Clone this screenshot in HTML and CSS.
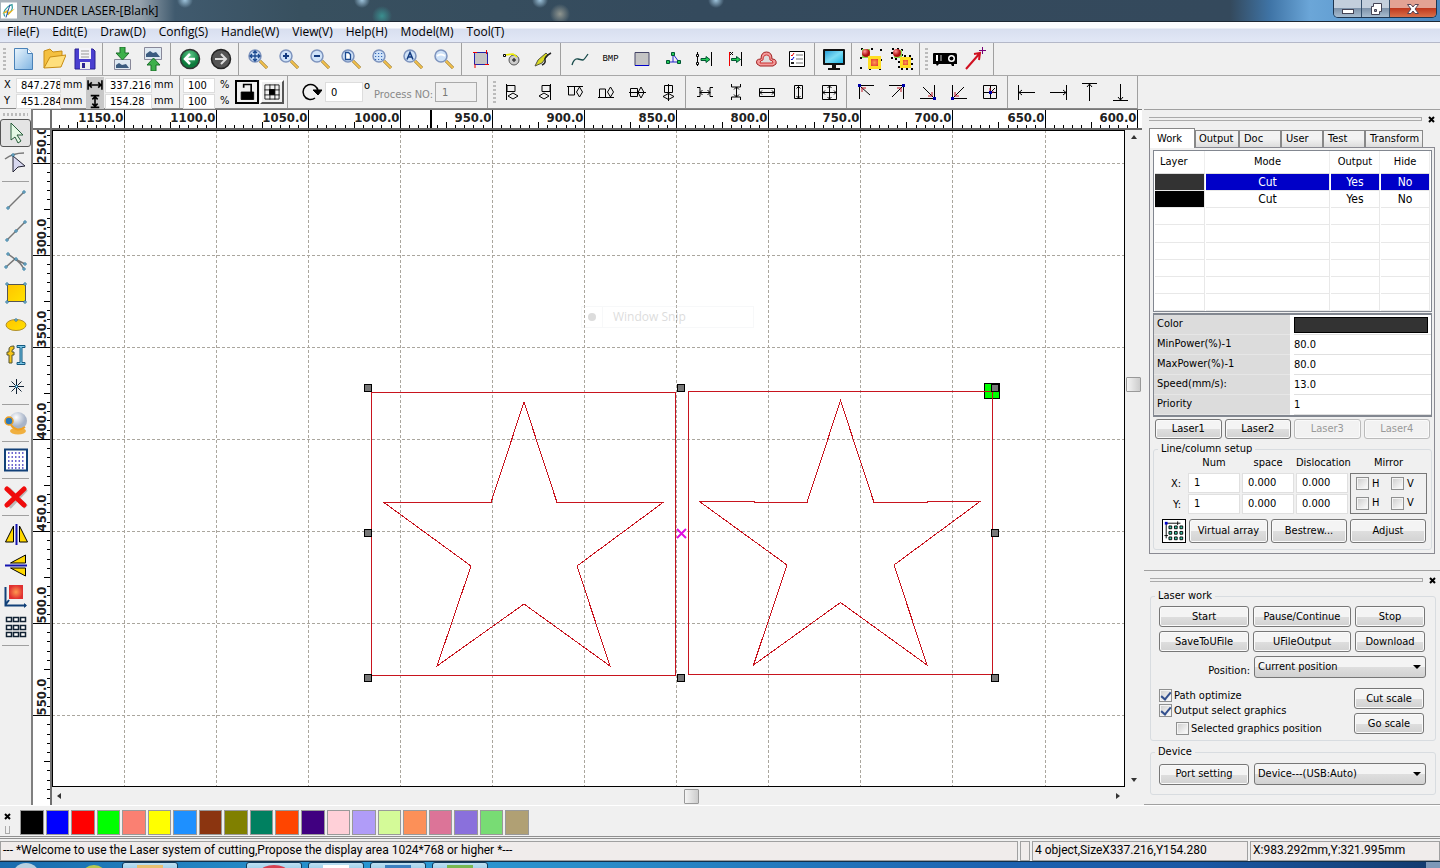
FILE: index.html
```html
<!DOCTYPE html>
<html lang="en">
<head>
<meta charset="utf-8">
<title>THUNDER LASER-[Blank]</title>
<link rel="stylesheet" href="styles.css">
</head>
<body>
<header class="titlebar">
  <svg class="app-logo" viewBox="0 0 16 16"><rect width="16" height="16" fill="#fff"/><path d="M4 14C1 10 5 4 11 2c1 4-1 8-5 10" fill="none" stroke="#2c9a9a" stroke-width="1.200"/><path d="M1 11l6-4v3l7-4-7 7v-3z" fill="#f0b820"/><path d="M9 2L5 15" stroke="#2450a0"/></svg>
  <h1 class="app-title">THUNDER LASER-[Blank]</h1>
  <div class="win-buttons">
    <button class="win-btn" aria-label="Minimize"><svg viewBox="0 0 14 12"><rect x="1.500" y="6.500" width="11" height="4" fill="#fff" stroke="#445"/></svg></button>
    <button class="win-btn" aria-label="Restore"><svg viewBox="0 0 14 12"><path d="M4.500 .5h8v8h-2v3h-8v-8h2z" fill="#fff" stroke="#445"/><path d="M5.500 6.500h2v2h-2z" fill="#99a" stroke="#445"/></svg></button>
    <button class="win-btn win-close" aria-label="Close"><svg viewBox="0 0 14 12"><path d="M1.500 1.500h3.500l2 2.500 2-2.500h3.500L9 6l3.500 4.500H9L7 8l-2 2.500H1.500L5 6z" fill="#fff" stroke="#545"/></svg></button>
  </div>
</header>

<nav class="menubar">
  <button>File(F)</button><button>Edit(E)</button><button>Draw(D)</button><button>Config(S)</button><button>Handle(W)</button><button>View(V)</button><button>Help(H)</button><button>Model(M)</button><button>Tool(T)</button>
</nav>

<svg class="defs" width="0" height="0">
  <defs>
    <linearGradient id="page" x2="1" y2="1"><stop stop-color="#eaf5fd"/><stop offset="1" stop-color="#7fb4e2"/></linearGradient>
    <linearGradient id="screen" x2="1" y2="1"><stop stop-color="#2a9fd8"/><stop offset=".5" stop-color="#7cdcf5"/><stop offset="1" stop-color="#1fb6e6"/></linearGradient>
    <radialGradient id="ball" cx=".35" cy=".3"><stop stop-color="#f99"/><stop offset="1" stop-color="#b01010"/></radialGradient>
    <radialGradient id="hot"><stop stop-color="#ff9a50"/><stop offset="1" stop-color="#e03030"/></radialGradient>
    <radialGradient id="green" cy=".3"><stop stop-color="#5fc98a"/><stop offset="1" stop-color="#0d7a3c"/></radialGradient>
    <radialGradient id="pearl" cx=".4" cy=".3"><stop stop-color="#fff"/><stop offset="1" stop-color="#a8b4c8"/></radialGradient>
    <linearGradient id="gold" x2="1" y2="1"><stop stop-color="#ffc400"/><stop offset="1" stop-color="#ffe200"/></linearGradient>
    <symbol id="lens" viewBox="0 0 24 24"><path d="M14 14l7 7" stroke="#8a6a20" stroke-width="3"/><path d="M14 14l7 7" stroke="#f2c14e" stroke-width="2"/><circle cx="9" cy="9" r="6" fill="#cfe2f8" stroke="#7d93bd" stroke-width="1.500"/></symbol>
  </defs>
</svg>

<div class="toolbar tools-main">
  <i class="grip"></i>
  <button aria-label="New"><svg viewBox="0 0 24 24"><path d="M3.500 1.500h13l5 5v16h-18z" fill="url(#page)" stroke="#4a82b8"/><path d="M16.500 1.500v5h5" fill="#fff" stroke="#4a82b8"/></svg></button>
  <button aria-label="Open"><svg viewBox="0 0 24 24"><path d="M2 21V4l6-2 3 3 9-1v5" fill="#f4c040" stroke="#c78c14"/><path d="M2 21l6-11 16-2-5 12z" fill="#ffdf7c" stroke="#c78c14"/></svg></button>
  <button aria-label="Save"><svg viewBox="0 0 24 24"><path d="M2 2h18l2 2v18H2z" fill="#4a3fd0" stroke="#2b2390"/><path d="M6 1h12v11H6z" fill="#f4f4f8"/><path d="M8 4h8M8 7h8M8 10h8" stroke="#999"/><path d="M7 15h10v7H7z" fill="#eee"/><path d="M9 16h3v5H9z" fill="#2b2390"/></svg></button>
  <i class="sep"></i>
  <button aria-label="Import"><svg viewBox="0 0 24 24"><path d="M4.500 12.500h16v10h-16z" fill="#dfe9f2" stroke="#889"/><path d="M6 21v-3l3-2 3 2 4-1 3 4z" fill="#3c5c80"/><path d="M10 0h5v6h4l-6.500 7L6 6h4z" fill="#3db04a" stroke="#1c6f2a"/></svg></button>
  <button aria-label="Export"><svg viewBox="0 0 24 24"><path d="M3.500 .5h17v12h-17z" fill="#dfe9f2" stroke="#889"/><path d="M5 10V7l4-3 3 2 3-1 4 5z" fill="#3c5c80"/><path d="M10 24v-6H6l6.500-7 6.500 7h-4v6z" fill="#3db04a" stroke="#1c6f2a"/></svg></button>
  <i class="sep"></i>
  <button aria-label="Undo"><svg viewBox="0 0 24 24"><circle cx="12" cy="12" r="9.500" fill="url(#green)" stroke="#333" stroke-width="1.500"/><path d="M17 12H8M12 7l-5 5 5 5" fill="none" stroke="#fff" stroke-width="2.500"/></svg></button>
  <button aria-label="Redo"><svg viewBox="0 0 24 24"><circle cx="12" cy="12" r="9.500" fill="#555" stroke="#222" stroke-width="1.500"/><path d="M6 12h10M12 7l5 5-5 5" fill="none" stroke="#ddd" stroke-width="2"/></svg></button>
  <i class="sep"></i>
  <button aria-label="Pan"><svg viewBox="0 0 24 24"><use href="#lens"/><path d="M9 4v10M4 9h10M7 6l2-2 2 2M7 12l2 2 2-2M6 7L4 9l2 2M12 7l2 2-2 2" fill="none" stroke="#1c4a90" stroke-width="1.300"/></svg></button>
  <button aria-label="Zoom in"><svg viewBox="0 0 24 24"><use href="#lens"/><path d="M9 6v6M6 9h6" stroke="#123a80" stroke-width="2"/></svg></button>
  <button aria-label="Zoom out"><svg viewBox="0 0 24 24"><use href="#lens"/><path d="M6 9h6" stroke="#123a80" stroke-width="2"/></svg></button>
  <button aria-label="Zoom page"><svg viewBox="0 0 24 24"><use href="#lens"/><path d="M6.500 5.500h3l2 2v5h-5z" fill="#fff" stroke="#1c4a90" stroke-width="1.300"/></svg></button>
  <button aria-label="Zoom all"><svg viewBox="0 0 24 24"><use href="#lens"/><path d="M5 6.500h8M5 9.500h8M5 12.500h8" stroke="#3468b8" stroke-width="1.200" stroke-dasharray="1.200 1.800"/></svg></button>
  <button aria-label="Zoom selected"><svg viewBox="0 0 24 24"><use href="#lens"/><path d="M6 12.500l3-7 3 7M7 10h4" fill="none" stroke="#123a80" stroke-width="1.500"/></svg></button>
  <button aria-label="Zoom window"><svg viewBox="0 0 24 24"><use href="#lens"/><path d="M5 9q4-3 8 0" stroke="#fff" stroke-width="2" fill="none"/></svg></button>
  <i class="sep"></i>
  <button aria-label="Frame"><svg viewBox="0 0 24 24"><path d="M5.500 5.500h13v12h-13z" fill="#c4c4c4" stroke="#22a"/><path d="M4 5.500h4M6 17v4M17.500 3v4M16 17.500h4" stroke="#e00"/></svg></button>
  <button aria-label="Lead setting"><svg viewBox="0 0 24 24"><circle cx="14" cy="13" r="5" fill="#ccc" stroke="#555"/><path d="M5 8l8-1 4 3" fill="none" stroke="#ee0" stroke-width="1.500"/><path d="M3.500 7.500h2v2h-2zM13 12h2v2h-2z" fill="#fff" stroke="#000"/></svg></button>
  <button aria-label="Edit path"><svg viewBox="0 0 24 24"><path d="M4 19l3-6 8-7 2 2-6 8z" fill="#d8d820" stroke="#554"/><path d="M11 18q4-2 3-5t6-7" fill="none" stroke="#222" stroke-width="1.500"/></svg></button>
  <i class="sep"></i>
  <button aria-label="Curve smooth"><svg viewBox="0 0 24 24"><path d="M4 18q2-7 6-6t5 1 5-6" fill="none" stroke="#174a4a" stroke-width="1.300"/></svg></button>
  <button aria-label="Bitmap"><span class="bmp">BMP</span></button>
  <button aria-label="Rectangle cut"><svg viewBox="0 0 24 24"><path d="M5 5.500h14v13H5z" fill="#c4c4c4" stroke="#446"/><path d="M5 18.500h14" stroke="#00c"/></svg></button>
  <button aria-label="Nodes"><svg viewBox="0 0 24 24"><path d="M12 7v8H7m5 0h6l-6-8" fill="none" stroke="#22c"/><path d="M10.500 5.500h3v3h-3zM5.500 13.500h3v3h-3zM16.500 13.500h3v3h-3z" fill="#2c5" stroke="#053"/></svg></button>
  <button aria-label="Offset"><svg viewBox="0 0 24 24"><path d="M5.500 5v14M19.500 5v14" stroke="#000"/><path d="M9 11.500h5v-2l4 3-4 3v-2H9z" fill="#2c5" stroke="#053"/><path d="M4.500 7.500h2v2h-2zM4.500 15.500h2v2h-2z" fill="#fff" stroke="#000"/></svg></button>
  <button aria-label="Shift"><svg viewBox="0 0 24 24"><path d="M6.500 5v14" stroke="#e00"/><path d="M18.500 5v14M7 5l3 3m0-3L7 8" stroke="#000"/><path d="M8.500 11.500h5v-2l4 3-4 3v-2h-5z" fill="#2c5" stroke="#053"/></svg></button>
  <button aria-label="Parallel"><svg viewBox="0 0 24 24"><path d="M3 17q-2-5 4-5 0-7 5.500-7t5.500 7q5 0 4 5l-3 2H6z" fill="#f49a9a" stroke="#a02020"/><path d="M6 16q0-3 3-3 0-5 3.500-5t3.500 5q3 0 3 3z" fill="#ddd" stroke="#c33"/></svg></button>
  <button aria-label="Options"><svg viewBox="0 0 24 24"><path d="M4.500 4.500h15v15h-15z" fill="#fff" stroke="#000"/><path d="M11 8h7M11 12h7M11 16h7" stroke="#777"/><path d="M6 8l1 1 2-3" fill="none" stroke="#e00"/><path d="M6 12l1 1 2-3" fill="none" stroke="#00c"/><path d="M6 15h3v2H6z" fill="#222"/></svg></button>
  <i class="sep"></i>
  <button aria-label="Preview"><svg viewBox="0 0 24 24"><rect x="1" y="2" width="22" height="16" rx="1" fill="#111"/><path d="M3 4h18v12H3z" fill="url(#screen)"/><path d="M10 18h4v3h4v2H6v-2h4z" fill="#111"/></svg></button>
  <i class="sep"></i>
  <button aria-label="Group"><svg viewBox="0 0 24 24"><path d="M2 2h20v20H2z" fill="none" stroke="#000" stroke-width="2" stroke-dasharray="2 8"/><path d="M3 2h8v9H3z" fill="#8d5"/><circle cx="7" cy="6" r="4" fill="url(#ball)"/><path d="M10.500 10.500h10v10h-10z" fill="url(#hot)" stroke="#fd2" stroke-width="3"/></svg></button>
  <button aria-label="Ungroup"><svg viewBox="0 0 24 24"><path d="M2 2h10v10H2zM9 9h13v13H9z" fill="none" stroke="#000" stroke-width="2" stroke-dasharray="2 3"/><path d="M4 3h8v8H4z" fill="#8d5"/><circle cx="7" cy="6" r="4" fill="url(#ball)"/><path d="M11.500 11.500h8v8h-8z" fill="url(#hot)" stroke="#fd2" stroke-width="3"/></svg></button>
  <i class="sep"></i><i class="grip"></i>
  <button aria-label="Projector"><svg viewBox="0 0 24 24"><path d="M0 7q0-1 1-1h21q2 0 2 2v9h-3v2h-2l-1-2H6l-2 2-1-2H0z" fill="#000"/><path d="M4 8v6" stroke="#fff" stroke-width="2"/><path d="M8 8v6" stroke="#666" stroke-width="2"/><circle cx="18.500" cy="11.500" r="3.500" fill="#fff"/><circle cx="18.500" cy="11.500" r="2" fill="#000"/></svg></button>
  <button aria-label="Pick origin"><svg viewBox="0 0 24 24"><path d="M2 22L16 6M10 7l6-1-1 7" fill="none" stroke="#d01020" stroke-width="2"/><path d="M18.500 0v7M15 3.500h7" stroke="#707"/></svg></button>
  <i class="sep"></i>
</div>

<div class="toolbar tools-object">
  <div class="coords">
    <label for="pos-x">X</label><input id="pos-x" value="847.278"><span>mm</span><svg viewBox="0 0 16 15" class="axis"><path d="M1.500 3v9M14.500 3v9M2 7.500h12M5 5L2.500 7.500 5 10M11 5l2.500 2.500L11 10" fill="none" stroke="#000" stroke-width="1.500"/></svg><input aria-label="Width" value="337.216"><span>mm</span>
    <label for="pos-y">Y</label><input id="pos-y" value="451.284"><span>mm</span><svg viewBox="0 0 16 15" class="axis"><path d="M4 2.500h8M4 13.500h8M8 3v10M5.500 6L8 3.500 10.500 6M5.500 10L8 12.500l2.500-2.500" fill="none" stroke="#000" stroke-width="1.500"/></svg><input aria-label="Height" value="154.28"><span>mm</span>
  </div>
  <i class="sep"></i>
  <div class="scale">
    <input aria-label="Scale X" value="100"><span>%</span>
    <input aria-label="Scale Y" value="100"><span>%</span>
  </div>
  <button class="boxed pressed" aria-label="Lock ratio"><svg viewBox="0 0 24 24"><path class="solid" d="M5 12h15v9H5z"/><path class="bold" d="M8 7V3h9v9"/></svg></button>
  <button class="boxed" aria-label="Anchor"><svg viewBox="0 0 24 24"><path d="M3.500 3.500h17v17h-17zM9.500 3v18M15.500 3v18M3 9.500h18M3 15.500h18"/><path class="solid" d="M9 9h6v6H9z"/></svg></button>
  <i class="sep"></i>
  <button aria-label="Rotate" class="rotate"><svg viewBox="0 0 24 24"><path class="arc" d="M17 18a7.500 7.500 0 1 1 3-7"/><path class="solid" d="M15 10h9l-4 5z"/></svg></button>
  <input class="angle" aria-label="Angle" value="0"><span class="degree">o</span>
  <label class="process" for="proc">Process NO:</label><input id="proc" class="proc" value="1" disabled>
  <i class="sep"></i><i class="grip"></i>
  <button aria-label="Align left"><svg viewBox="0 0 24 24"><path d="M5.500 4v16M6 5.500h8v6H6zM7 16l5-3 5 3-5 3z"/></svg></button>
  <button aria-label="Align right"><svg viewBox="0 0 24 24"><path d="M18.500 4v16M18 5.500h-8v6h8zM7 16l5-3 5 3-5 3z"/></svg></button>
  <button aria-label="Align top"><svg viewBox="0 0 24 24"><path d="M4 6.500h16M5.500 7v8h6V7M16.500 7l3 5-3 5-3-5z"/></svg></button>
  <button aria-label="Align bottom"><svg viewBox="0 0 24 24"><path d="M4 17.500h16M5.500 17V9h6v8M16.500 17l3-5-3-5-3 5z"/></svg></button>
  <button aria-label="Align middle"><svg viewBox="0 0 24 24"><path d="M4 12.500h17M5.500 8.500h7v8h-7zM16 7l3 5.500-3 5.500-3-5.500z"/></svg></button>
  <button aria-label="Align center"><svg viewBox="0 0 24 24"><path d="M12.500 4v17M8.500 5.500h8v7h-8zM7 16.500l5.500-3 5.500 3-5.500 3z"/></svg></button>
  <i class="sep"></i>
  <button aria-label="Space horizontally"><svg viewBox="0 0 24 24"><path d="M4 7.500h3v9H4M20 7.500h-3v9h3M7 12.500h10M9.500 10L7 12.500 9.500 15M14.500 10l2.500 2.500-2.500 2.500"/></svg></button>
  <button aria-label="Space vertically"><svg viewBox="0 0 24 24"><path d="M7.500 4v3h9V4M7.500 20v-3h9v3M12.500 7v10M10 9.500L12.500 7 15 9.500M10 14.500l2.500 2.500 2.500-2.500"/></svg></button>
  <button aria-label="Same width"><svg viewBox="0 0 24 24"><path d="M4.500 8.500h15v8h-15zM5 12.500h14M7 10.500l-2 2 2 2M17 10.500l2 2-2 2"/></svg></button>
  <button aria-label="Same height"><svg viewBox="0 0 24 24"><path d="M8.500 5.500h8v13h-8zM12.500 6v12M10.500 8.500l2-2 2 2M10.500 16l2 2 2-2"/></svg></button>
  <button aria-label="Same size"><svg viewBox="0 0 24 24"><path d="M5.500 5.500h14v14h-14zM12.500 5v15M5 12.500h15M10.500 8l2-2 2 2M10.500 17l2 2 2-2M8 10.500l-2 2 2 2M17 10.500l2 2-2 2"/></svg></button>
  <i class="sep"></i>
  <button aria-label="To top left"><svg viewBox="0 0 24 24"><path d="M5.500 19V5.500H20M7 7l9 8"/><path d="M8 12V8h4" class="red"/><path d="M4 4h3v3H4z" class="dot"/></svg></button>
  <button aria-label="To top right"><svg viewBox="0 0 24 24"><path d="M18.500 19V5.500H4M17 7l-10 10"/><path d="M16 12V8h-4" class="red"/><path d="M17 4h3v3h-3z" class="dot"/></svg></button>
  <button aria-label="To bottom right"><svg viewBox="0 0 24 24"><path d="M18.500 5v13.500H4M17 17L7 7"/><path d="M16 12v4h-4" class="red"/><path d="M17 17h3v3h-3z" class="dot"/></svg></button>
  <button aria-label="To bottom left"><svg viewBox="0 0 24 24"><path d="M5.500 5v13.500H20M7 17L17 7"/><path d="M8 12v4h4" class="red"/><path d="M4 17h3v3H4z" class="dot"/></svg></button>
  <button aria-label="To center"><svg viewBox="0 0 24 24"><path d="M5.500 5.500h13v13h-13zM12.500 5v14M5 12.500h14M13 12l4-4"/><path d="M12 8v4h4" class="red"/><path d="M11 11h3v3h-3z" class="dot"/></svg></button>
  <i class="sep"></i>
  <button aria-label="To left edge"><svg viewBox="0 0 24 24"><path d="M3.500 5v15M4 12.500h16M7 10l-3 2.500L7 15"/></svg></button>
  <button aria-label="To right edge"><svg viewBox="0 0 24 24"><path d="M20.500 5v15M4 12.500h16M17 10l3 2.500-3 2.500"/></svg></button>
  <button aria-label="To top edge"><svg viewBox="0 0 24 24"><path d="M5 3.500h15M12.500 4v17M10 7l2.500-3L15 7"/></svg></button>
  <button aria-label="To bottom edge"><svg viewBox="0 0 24 24"><path d="M5 20.500h15M12.500 4v16M10 17l2.500 3 2.500-3"/></svg></button>
</div>

<main class="workspace">
  <aside class="side-tools">
    <i class="grip-h"></i>
    <button class="pressed" aria-label="Select"><svg viewBox="0 0 24 24"><path d="M7 2l12 12h-6l4 6-3 2-3-6-4 3z" fill="#e4f8e4" stroke="#275c3a"/></svg></button>
    <button aria-label="Edit nodes"><svg viewBox="0 0 24 24"><path d="M1 8q8-6 19-6" fill="none" stroke="#777" stroke-width="1.500"/><path d="M9 5v16l5-5 7-1z" fill="#d8d8f0" stroke="#223"/><path d="M8 3h2v2H8z" class="node"/></svg></button>
    <hr>
    <button aria-label="Line"><svg viewBox="0 0 24 24"><path d="M4 20L20 4" stroke="#777" stroke-width="1.500"/><path d="M3 19h2v2H3zM19 3h2v2h-2z" class="node"/></svg></button>
    <button aria-label="Polyline"><svg viewBox="0 0 24 24"><path d="M3 21L21 3" stroke="#777" stroke-width="1.500"/><path d="M2 20h2v2H2zM11 11h2v2h-2zM20 2h2v2h-2z" class="node"/></svg></button>
    <button aria-label="Bezier"><svg viewBox="0 0 24 24"><path d="M2 17l9-8 10 5M4 4l7 5q5 3 9 10" fill="none" stroke="#777" stroke-width="1.500"/><path d="M1 16h2v2H1zM3 3h2v2H3zM11 8h2v2h-2zM20 13h2v2h-2zM19 18h2v2h-2z" class="node"/></svg></button>
    <button aria-label="Rectangle"><svg viewBox="0 0 24 24"><path d="M3.500 3.500h18v17h-18z" fill="url(#gold)" stroke="#555"/><path d="M2 2h2v2H2zM20 2h2v2h-2zM2 20h2v2H2zM20 20h2v2h-2z" class="node"/></svg></button>
    <button aria-label="Ellipse"><svg viewBox="0 0 24 24"><ellipse cx="12" cy="13" rx="10" ry="5.500" fill="url(#gold)" stroke="#b09030"/><path d="M11 7h2v2h-2z" class="node"/></svg></button>
    <button aria-label="Text"><svg viewBox="0 0 24 24"><path d="M5 20V12H3V9h2V6q0-3 5-3v3q-2 0-2 2v1h2v3H8v8z" fill="#f5c518" stroke="#553"/><path d="M13 2.500h8v2h-3v15h3v2h-8v-2h3v-15h-3z" fill="#7cc8e8" stroke="#155a80"/></svg></button>
    <button aria-label="Point"><svg viewBox="0 0 24 24"><path d="M12.500 5v15M5 12.500h15M7.500 7.500l10 10M17.500 7.500l-10 10" stroke="#123"/><path d="M11.500 11.500h2v2h-2z" class="node"/></svg></button>
    <hr>
    <button aria-label="Camera"><svg viewBox="0 0 24 24"><ellipse cx="14" cy="20" rx="8" ry="3.500" fill="#f0b040"/><circle cx="14" cy="10" r="9" fill="url(#pearl)"/><path d="M7 14q6 8 14 2" stroke="#f0a020" stroke-width="2" fill="none"/><circle cx="5" cy="10" r="4" fill="#2a78b8" stroke="#f0a020" stroke-width="1.500"/></svg></button>
    <hr>
    <button aria-label="Grid"><svg viewBox="0 0 24 24"><path d="M1 1.500h22v21H1z" fill="#fff" stroke="#114078" stroke-width="2"/><path d="M4 5h17M4 9h17M4 13h17M4 17h17M4 20h17" stroke="#4038c0" stroke-width="1.500" stroke-dasharray="1.500 2"/></svg></button>
    <hr>
    <button aria-label="Delete"><svg viewBox="0 0 24 24"><path d="M4 4l18 18M22 4L5 22" stroke="#bbb" stroke-width="5"/><path d="M3 4l17 16M20 4L3 20" stroke="#f00c0c" stroke-width="5" stroke-linecap="round"/></svg></button>
    <hr>
    <button aria-label="Mirror horizontal"><svg viewBox="0 0 24 24"><path d="M9.500 4v16h-8zM15.500 4v16h8z" fill="#ffd800" stroke="#000"/><path d="M12.500 2v21" stroke="#1414b0" stroke-width="2"/></svg></button>
    <button aria-label="Mirror vertical"><svg viewBox="0 0 24 24"><path d="M21.500 2v8h-15zM21.500 15v8l-15-8z" fill="#ffd800" stroke="#000"/><path d="M1 12.500h22" stroke="#1414b0" stroke-width="2"/></svg></button>
    <button aria-label="Origin"><svg viewBox="0 0 24 24"><path d="M5 1h14v14H5z" fill="url(#hot)"/><path d="M1.500 3v18.500H22M5 16l-3 4" fill="none" stroke="#114078" stroke-width="2"/><path d="M20 19l3 2.500-3 2.500z" fill="#114078"/></svg></button>
    <button aria-label="Array"><svg viewBox="0 0 24 24"><path d="M2.500 2.500h5v4h-5zM9.500 2.500h5v4h-5zM16.500 2.500h5v4h-5zM2.500 10.500h5v4h-5zM9.500 10.500h5v4h-5zM16.500 10.500h5v4h-5zM2.500 17.500h5v4h-5zM9.500 17.500h5v4h-5zM16.500 17.500h5v4h-5z" fill="#fff" stroke="#123" stroke-width="1.500"/></svg></button>
    <hr>
  </aside>

  <section class="stage">
    <div class="corner"></div>
    <svg class="ruler-x" id="ruler-x"></svg>
    <svg class="ruler-y" id="ruler-y"></svg>
    <div class="canvas">
      <svg id="drawing">
        <g id="grid" transform="translate(-1 -1)"></g>
        <g transform="translate(-53 -131)">
          <g class="cut">
            <path d="M371.500 392.500H675.500V675.500H371.500z"/>
            <path d="M524 402L557 502.500H663L577 566L610 666L524 604L437 666L471 566L384 502.500H491z"/>
            <path d="M688.500 391.500H992.500V674.500H688.500z"/>
          </g>
          <path class="origin" d="M984.500 383.500h15v15h-15z"/>
          <g class="cut">
            <path d="M984 391.500H992.500V399"/>
            <path d="M840.500 400.500L874 502.500H927V501.500H980L894 565L927 665L840.500 602.500L753.500 665L787 565L699.500 501.500H754V502.500H807z"/>
          </g>
          <path class="handle" d="M364.500 384.500h7v7h-7zM677.500 384.500h7v7h-7zM991.500 384.500h7v7h-7zM364.500 529.500h7v7h-7zM991.500 529.500h7v7h-7zM364.500 674.500h7v7h-7zM677.500 674.500h7v7h-7zM991.500 674.500h7v7h-7z"/>
          <path class="center" d="M677 529l9 9M686 529l-9 9"/>
          <g class="snip"><rect x="581.500" y="306.500" width="172" height="21"/><path d="M602.500 307v20"/><circle cx="592" cy="317" r="4"/><text x="613" y="321">Window Snip</text></g>
        </g>
      </svg>
    </div>
    <div class="scroll-y"><i class="arrow up"></i><i class="thumb"></i><i class="arrow down"></i></div>
    <div class="scroll-x"><i class="arrow left"></i><i class="thumb"></i><i class="arrow right"></i></div>
  </section>

  <aside class="docks">
    <section class="dock dock-work">
      <div class="dock-bar"><i></i><button aria-label="Close panel"><svg viewBox="0 0 7 7"><path d="M1 1l5 5M6 1L1 6" stroke="#000" stroke-width="2"/></svg></button></div>
      <div class="tabs" role="tablist">
        <button class="active" role="tab">Work</button><button role="tab">Output</button><button role="tab">Doc</button><button role="tab">User</button><button role="tab">Test</button><button role="tab">Transform</button>
      </div>
      <div class="tab-page">
        <table class="layers">
          <thead><tr><th>Layer</th><th>Mode</th><th>Output</th><th>Hide</th></tr></thead>
          <tbody>
            <tr class="selected"><td class="ink-gray"></td><td>Cut</td><td>Yes</td><td>No</td></tr>
            <tr><td class="ink-black"></td><td>Cut</td><td>Yes</td><td>No</td></tr>
            <tr><td></td><td></td><td></td><td></td></tr>
            <tr><td></td><td></td><td></td><td></td></tr>
            <tr><td></td><td></td><td></td><td></td></tr>
            <tr><td></td><td></td><td></td><td></td></tr>
            <tr><td></td><td></td><td></td><td></td></tr>
            <tr><td></td><td></td><td></td><td></td></tr>
          </tbody>
        </table>
        <dl class="props">
          <dt>Color</dt><dd><i class="color-bar"></i></dd>
          <dt>MinPower(%)-1</dt><dd>80.0</dd>
          <dt>MaxPower(%)-1</dt><dd>80.0</dd>
          <dt>Speed(mm/s):</dt><dd>13.0</dd>
          <dt>Priority</dt><dd>1</dd>
        </dl>
        <div class="lasers"><button class="btn">Laser1</button><button class="btn">Laser2</button><button class="btn" disabled>Laser3</button><button class="btn" disabled>Laser4</button></div>
        <fieldset class="array-box">
          <legend>Line/column setup</legend>
          <div class="array-grid">
            <span></span><span class="head">Num</span><span class="head">space</span><span class="head">Dislocation</span><span class="head">Mirror</span>
            <span class="axis-name">X:</span><input aria-label="X num" value="1"><input aria-label="X space" value="0.000"><input aria-label="X dislocation" value="0.000">
            <div class="mirror"><label><input type="checkbox">H</label><label><input type="checkbox">V</label><label><input type="checkbox">H</label><label><input type="checkbox">V</label></div>
            <span class="axis-name">Y:</span><input aria-label="Y num" value="1"><input aria-label="Y space" value="0.000"><input aria-label="Y dislocation" value="0.000">
          </div>
          <div class="array-actions">
            <button class="array-icon" aria-label="Array direction"><svg viewBox="0 0 24 24"><path d="M3.500 3v17M3 3.500h16M16 1.500v4M1.500 17h4" fill="none" stroke="#000"/><path d="M2 2h3v3H2z" fill="#00c"/><path d="M6.500 6.500h3v3h-3zM12.500 6.500h3v3h-3zM18.500 6.500h3v3h-3zM6.500 12.500h3v3h-3zM12.500 12.500h3v3h-3zM18.500 12.500h3v3h-3zM6.500 18.500h3v3h-3zM12.500 18.500h3v3h-3zM18.500 18.500h3v3h-3z" fill="#3cc8a8" stroke="#000"/></svg></button>
            <button class="btn">Virtual array</button><button class="btn">Bestrew...</button><button class="btn">Adjust</button>
          </div>
        </fieldset>
      </div>
    </section>

    <section class="dock dock-laser">
      <div class="dock-bar"><i></i><button aria-label="Close panel"><svg viewBox="0 0 7 7"><path d="M1 1l5 5M6 1L1 6" stroke="#000" stroke-width="2"/></svg></button></div>
      <fieldset class="laser-box">
        <legend>Laser work</legend>
        <div class="laser-grid">
          <button class="btn">Start</button><button class="btn">Pause/Continue</button><button class="btn">Stop</button>
          <button class="btn">SaveToUFile</button><button class="btn">UFileOutput</button><button class="btn">Download</button>
        </div>
        <div class="field-row"><label for="position">Position:</label><span class="combo"><select id="position"><option>Current position</option></select></span></div>
        <div class="options">
          <div class="checks">
            <label><input type="checkbox" checked>Path optimize</label>
            <label><input type="checkbox" checked>Output select graphics</label>
            <label class="indent"><input type="checkbox">Selected graphics position</label>
          </div>
          <div class="scales"><button class="btn">Cut scale</button><button class="btn">Go scale</button></div>
        </div>
      </fieldset>
      <fieldset class="device-box">
        <legend>Device</legend>
        <div class="field-row device-row"><button class="btn">Port setting</button><span class="combo"><select aria-label="Device"><option>Device---(USB:Auto)</option></select></span></div>
      </fieldset>
    </section>
  </aside>
</main>

<footer class="palette">
  <div class="palette-ctl"><svg viewBox="0 0 7 7"><path d="M1 1l5 5M6 1L1 6" stroke="#000" stroke-width="2"/></svg><i></i></div>
  <div class="swatches" id="swatches"></div>
</footer>
<div class="statusbar">
  <span>--- *Welcome to use the Laser system of cutting,Propose the display area 1024*768 or higher *---</span><span></span><span>4 object,SizeX337.216,Y154.280</span><span>X:983.292mm,Y:321.995mm</span>
</div>
<div class="taskbar"><i class="orb"></i><i class="ie"></i><i class="task folder"></i><i class="task red-app"></i><i class="task doc"></i><i class="task blue-app"></i><i class="task leaf"></i><i class="tray"></i></div>
<script src="app.js"></script>
</body>
</html>
```
FILE: app.js
```js
const NS = "http://www.w3.org/2000/svg";
const STEP = 92.1;      // pixels for 50 mm
const FIRST_X = 72;     // 1150 mm line
const FIRST_Y = 33;     // 250 mm line

function add(parent, tag, attrs, text) {
  const el = document.createElementNS(NS, tag);
  for (const k in attrs) el.setAttribute(k, attrs[k]);
  if (text) el.textContent = text;
  parent.appendChild(el);
}

function draw() {
  const rx = document.getElementById("ruler-x");
  const ry = document.getElementById("ruler-y");
  const grid = document.getElementById("grid");
  for (const el of [rx, ry, grid]) el.replaceChildren();
  const w = rx.clientWidth, h = ry.clientHeight;
  for (let i = -7; FIRST_X + i * STEP / 10 < w; i++) {
    const x = Math.floor(FIRST_X + i * STEP / 10 + .01) + .5;
    const major = i % 10 === 0;
    const len = major ? 18 : i % 5 === 0 ? 6 : 3;
    add(rx, "path", { d: `M${x} ${18 - len}v${len}` });
    if (major) {
      add(rx, "text", { x: x - 1, y: 12, "text-anchor": "end" }, (1150 - i * 5).toFixed(1));
      add(grid, "path", { d: `M${x} 0v2000` });
    }
  }
  add(rx, "path", { d: "M379 0v18", "stroke-width": 2 });
  for (let i = -3; FIRST_Y + i * STEP / 10 < h; i++) {
    const y = Math.floor(FIRST_Y + i * STEP / 10 + .01) + .5;
    const major = i % 10 === 0;
    const len = major ? 17 : i % 5 === 0 ? 6 : 3;
    add(ry, "path", { d: `M${17 - len} ${y}h${len}` });
    if (major) {
      add(ry, "text", { transform: `translate(13 ${y}) rotate(-90)` }, (250 + i * 5).toFixed(1));
      add(grid, "path", { d: `M0 ${y}h3000` });
    }
  }
}
draw();
addEventListener("resize", draw);

const inks = ["#000", "#00f", "#f00", "#0f0", "#fa8072", "#ff0", "#1e90ff", "#8b3510", "#808000", "#008060",
  "#ff4500", "#400080", "#ffd0d8", "#b09cf8", "#d4fa98", "#fc9058", "#dc7498", "#8a70dc", "#78dc74", "#b0a074"];
for (const ink of inks) {
  const b = document.createElement("button");
  b.style.background = ink;
  b.setAttribute("aria-label", ink);
  document.getElementById("swatches").appendChild(b);
}
```
FILE: styles.css
```css
* { box-sizing: border-box; }
body { margin: 0; height: 100vh; display: flex; flex-direction: column; overflow: hidden; background: #f0f0f0; color: #000; font: 11px/14px "DejaVu Sans Condensed", "Noto Sans", sans-serif; }
button, input, select { font: inherit; color: inherit; margin: 0; padding: 0; border: 0; background: none; }
.defs { position: absolute; }
i { display: block; }

.titlebar { flex: none; height: 22px; display: flex; align-items: center; padding-left: 1px; border-bottom: 1px solid #1c2733; background: radial-gradient(circle at 382px 16px, #3a8f8f 0, transparent 10px), radial-gradient(circle at 560px 14px, #8f958f 0, transparent 10px), radial-gradient(circle at 185px 0, #9fc4dc 0, transparent 8px), radial-gradient(circle at 362px 0, #9fc4dc 0, transparent 8px), radial-gradient(circle at 540px 0, #9fc4dc 0, transparent 8px), radial-gradient(circle at 716px 0, #9fc4dc 0, transparent 8px), linear-gradient(90deg, #a9b3bb 0, #96a3ad 140px, #405a6e 175px, #38505f 300px, #344a5d 700px, #34495c 1230px, #3f74a6 1270px, #6ba6d8 1310px, #4a88c0 100%); }
.app-logo { width: 16px; height: 17px; }
.app-title { margin: 0 0 0 5px; font: 12px/18px "Open Sans", "Noto Sans", sans-serif; }
.win-buttons { display: flex; align-self: flex-start; margin-left: auto; margin-right: 3px; height: 18px; border: 1px solid #1d3550; border-top: 0; border-radius: 0 0 5px 5px; overflow: hidden; }
.win-btn { width: 28px; display: flex; align-items: center; justify-content: center; border-right: 1px solid #344f6b; background: linear-gradient(#c3cfdc 45%, #7e93aa 50%, #a8bccf); }
.win-btn svg { width: 14px; height: 12px; }
.win-close { width: 46px; border: 0; background: linear-gradient(#e3a293 45%, #c0391e 50%, #d8704a); }

.menubar { flex: none; height: 21px; display: flex; gap: 13px; padding-left: 7px; border-bottom: 1px solid #b4b8c8; background: linear-gradient(#fbfcfe 0 30%, #d8dff0 35%, #e2e8f6); font: 12px/20px "Open Sans", "Noto Sans", sans-serif; }

.toolbar { flex: none; height: 33px; display: flex; align-items: center; border-bottom: 1px solid #a8a8a8; }
.toolbar > button { flex: none; width: 31px; height: 30px; display: flex; align-items: center; justify-content: center; }
.toolbar svg { width: 24px; height: 24px; }
.tools-main { padding-left: 1px; }
.sep { flex: none; width: 1px; height: 32px; margin: 0 3px 0 2px; background: #a0a0a0; }
.grip { flex: none; width: 3px; height: 22px; margin: 0 1px 0 2px; background: repeating-linear-gradient(#bbb 0 2px, transparent 2px 4px); }
.bmp { font: 9px/12px "Liberation Mono", monospace; color: #000; }

.tools-object { width: 1138px; border-right: 1px solid #a0a0a0; border-bottom-color: #888; }
.tools-object > button path { fill: none; stroke: #000; }
.tools-object > button .red { stroke: #c01020; }
.tools-object > button .dot { fill: #00a; stroke: none; }
.tools-object > button .solid { fill: #000; }
.tools-object > button .bold { stroke-width: 2; }
.tools-object > button .arc { stroke-width: 1.500; }
.tools-object input { flex: none; background: #fff; border: 1px solid #ddd; height: 15px; }
.coords { flex: none; width: 177px; display: grid; grid-template-columns: 12px 45px 25px 19px 47px 1fr; grid-auto-rows: 16px; align-items: center; padding: 2px 0 0 4px; }
.coords input, .scale input { width: 100%; padding-left: 4px; }
.coords span, .scale span { padding-left: 2px; }
.coords .axis { width: 18px; height: 16px; background: #c8c8c8; }
.scale { flex: none; width: 52px; display: grid; grid-template-columns: 32px 1fr; grid-auto-rows: 16px; align-items: center; padding-top: 2px; }
.scale span { padding-left: 5px; }
.toolbar > .boxed { width: 24px; height: 24px; border: 2px solid; border-color: #fff #555 #555 #fff; margin-right: 1px; }
.toolbar > .boxed.pressed { border-color: #000; }
.toolbar > .rotate { margin-left: 3px; }
.toolbar .angle { width: 38px; height: 20px; padding-left: 5px; }
.degree { align-self: flex-start; padding: 3px 0 0 1px; }
.process { flex: none; white-space: nowrap; padding: 6px 2px 0 4px; color: #888; }
.toolbar .proc { width: 42px; height: 20px; padding-left: 6px; background: #f0f0f0; border: 1px solid #aaa; color: #777; margin-right: 8px; }

.workspace { flex: 1; min-height: 0; display: flex; }
.side-tools { flex: none; width: 33px; border-right: 2px solid #808080; }
.side-tools button { width: 31px; height: 31px; display: flex; align-items: center; justify-content: center; }
.side-tools .pressed { height: 28px; border: 1px solid #555; border-radius: 3px; background: #e4e4e4; }
.side-tools svg { width: 24px; height: 24px; }
.side-tools hr { margin: 3px 2px 2px; border: 0; height: 1px; background: #a0a0a0; }
.grip-h { height: 3px; margin: 4px 3px 3px; background: repeating-linear-gradient(90deg, #bbb 0 2px, transparent 2px 4px); }
.node { fill: #fff; stroke: #2a78a0; }

.stage { flex: 1; min-width: 0; display: grid; grid-template: 21px 1fr 18px / 19px 1fr 17px; }
.corner { background: #fff; border: solid #707070; border-width: 1px 2px 2px 0; }
.ruler-x, .ruler-y { width: 100%; height: 100%; background: #fff; stroke: #000; shape-rendering: crispEdges; overflow: hidden; }
.ruler-x text, .ruler-y text { font: bold 13px "DejaVu Sans Condensed", sans-serif; fill: #222; stroke: none; }
.ruler-x { grid-column: 2 / 4; border-top: 1px solid #777; border-bottom: 2px solid #666; }
.ruler-y { grid-row: 2 / 4; border-right: 2px solid #707070; }
.canvas { min-width: 0; min-height: 0; background: #fff; border: 1px solid #000; overflow: hidden; }
.canvas svg { display: block; width: 100%; height: 100%; }
#grid { stroke: #aaa69e; stroke-dasharray: 3 2; shape-rendering: crispEdges; }
.cut { fill: none; stroke: #c8141e; shape-rendering: crispEdges; }
.origin { fill: #0f0; stroke: #000; shape-rendering: crispEdges; }
.handle { fill: #777; stroke: #000; shape-rendering: crispEdges; }
.center { stroke: #e010e0; stroke-width: 2; }
.snip { opacity: .25; }
.snip rect, .snip path { fill: none; stroke: #e0e4ea; }
.snip circle { fill: #777; }
.snip text { font: 12px "Open Sans", sans-serif; fill: #777; }
.scroll-y { display: flex; flex-direction: column; align-items: center; justify-content: space-between; padding: 5px 0; }
.scroll-x { grid-column: 2; display: flex; align-items: center; justify-content: space-between; padding: 0 5px; }
.thumb { width: 15px; height: 15px; border: 1px solid #999; border-radius: 1px; background: linear-gradient(90deg, #f4f4f4, #ccc); }
.scroll-x .thumb { margin-left: 205px; }
.scroll-y .thumb { margin-bottom: 148px; }
.arrow { border: 3px solid transparent; }
.up { border-bottom: 4px solid #333; border-top: 0; }
.down { border-top: 4px solid #333; border-bottom: 0; }
.left { border-right: 4px solid #333; border-left: 0; }
.right { border-left: 4px solid #333; border-right: 0; }

.docks { flex: none; width: 298px; display: flex; flex-direction: column; padding-left: 2px; }
.dock { border-top: 1px solid #a0a0a0; padding: 0 5px; }
.dock-work { flex: 1; }
.dock-laser { padding: 0 4px 0 6px; height: 235px; border-bottom: 1px solid #a0a0a0; }
.dock-bar { height: 18px; display: flex; align-items: center; gap: 6px; }
.dock-bar i { flex: 1; height: 4px; border: 1px solid #aaa; border-left: 0; }
.dock-bar svg { display: block; width: 7px; height: 7px; }
.tabs { display: flex; align-items: flex-end; height: 19px; }
.tabs button { height: 17px; flex: 0 0 42px; text-align: left; padding-left: 4px; border: 1px solid #888; border-bottom: 0; background: linear-gradient(#f2f2f2 50%, #dcdcdc); }
.tabs button:nth-child(2) { flex-basis: 44px; padding-left: 3px; }
.tabs button:last-child { flex-basis: 58px; }
.tabs .active { flex-basis: 46px; height: 20px; margin-bottom: -1px; padding-left: 7px; background: #fff; }
.tab-page { border: 1px solid #8a8a92; padding: 2px 2px 3px 3px; height: 407px; }

.layers { width: 100%; height: 162px; border: 1px solid #828790; background: #fff; border-spacing: 1px 0; table-layout: fixed; font-size: 12px; }
.layers th { height: 23px; padding: 0; font: 11px/14px "DejaVu Sans Condensed", sans-serif; border-right: 1px solid #eee; border-bottom: 1px solid #ddd; }
.layers th:first-child { width: 50px; text-align: left; padding-left: 5px; }
.layers th:nth-child(3), .layers th:nth-child(4) { width: 49px; }
.layers td { height: 17px; padding: 0; line-height: 14px; text-align: center; border-right: 1px solid #e8e8e8; border-bottom: 1px solid #e8e8e8; }
.layers .selected td { background: #0000c8; color: #fff; }
.layers .selected .ink-gray { background: #333; }
.layers .ink-black { background: #000; }

.props { margin: 1px 0 0; height: 104px; display: grid; grid-template-columns: 136px 1fr; grid-auto-rows: 20px; border: 1px solid #828790; border-width: 2px 1px; background: #fff; }
.props dt { background: #dcdcdc; border-bottom: 1px solid #e6e6e6; padding: 2px 3px; }
.props dd { margin: 0 0 0 4px; padding-top: 3px; border-bottom: 1px solid #e0e0e0; }
.color-bar { height: 16px; margin-right: 3px; margin-top: -1px; background: #333; border: 1px solid #000; }

.btn { border: 1px solid #777; border-radius: 3px; background: linear-gradient(#f4f4f4 50%, #dedede 52%, #d2d2d2); box-shadow: inset 0 0 0 1px #fafafa; text-align: center; white-space: nowrap; }
.btn:disabled { border-color: #bbb; background: #f2f2f2; color: #999; }
.lasers { display: grid; grid-template-columns: repeat(4, 1fr); gap: 3px; padding: 2px 2px 0; grid-auto-rows: 20px; }
fieldset { margin: 0; min-width: 0; border: 1px solid #d8dce0; border-radius: 3px; padding: 0; }
legend { padding: 0 3px; margin-left: 4px; line-height: 14px; }
.array-box { margin-top: 3px; height: 108px; }
.array-grid { display: grid; grid-template-columns: 32px 52px 52px 52px 1fr; grid-template-rows: 16px 20px 20px; gap: 1px 2px; padding-right: 4px; }
.head { text-align: center; white-space: nowrap; }
.array-grid > input { background: #fff; border: 1px solid #e0e0e0; padding-left: 5px; width: 100%; }
.axis-name { text-align: right; padding: 4px 5px 0 0; }
.mirror { grid-column: 5; grid-row: 2 / 4; display: grid; grid-template-columns: 1fr 1fr; align-items: center; padding-left: 5px; border: 1px solid #777; }
.mirror label { display: flex; align-items: center; gap: 3px; }
input[type="checkbox"] { appearance: none; flex: none; width: 13px; height: 13px; border: 1px solid #8e8f8f; background: linear-gradient(135deg, #ccc, #fff); box-shadow: inset 0 0 0 1px #f4f4f4; }
input[type="checkbox"]:checked { display: flex; justify-content: center; }
input[type="checkbox"]:checked::after { content: ""; width: 4px; height: 8px; border: solid #33508e; border-width: 0 2px 2px 0; transform: rotate(40deg); }
.array-actions { display: grid; grid-template-columns: 24px 79px 76px 76px; gap: 3px; padding: 5px 0 0 8px; grid-auto-rows: 24px; }
.array-icon { background: #fff; border: 1px solid #000; }
.array-icon svg { display: block; width: 22px; height: 22px; }

.laser-box { height: 152px; }
.laser-grid { display: grid; grid-template-columns: 90px 98px 70px; grid-auto-rows: 21px; gap: 4px; padding: 3px 0 0 8px; }
.field-row { display: grid; grid-template-columns: 99px 172px; gap: 4px; align-items: center; margin-top: 4px; }
.field-row label { text-align: right; padding-top: 8px; }
.combo { position: relative; display: block; height: 22px; }
.combo::after { content: ""; position: absolute; right: 5px; top: 9px; border: 4px solid transparent; border-top-color: #000; border-bottom: 0; pointer-events: none; }
.combo select { appearance: none; width: 100%; height: 22px; padding-left: 3px; border: 1px solid #777; border-radius: 3px; background: linear-gradient(#f4f4f4 50%, #dedede 52%, #d2d2d2); }
.options { display: flex; justify-content: space-between; padding: 10px 11px 0 8px; }
.checks label { display: flex; align-items: center; gap: 2px; height: 15px; }
.checks .indent { margin: 3px 0 0 17px; }
.scales { display: grid; width: 70px; grid-auto-rows: 21px; gap: 4px; }
.device-box { height: 50px; margin-top: 4px; }
.device-row { grid-template-columns: 90px 172px; margin-top: 4px; padding-left: 8px; gap: 5px; }
.device-row .btn { height: 21px; }

.palette { flex: none; height: 32px; display: flex; padding: 4px 0 0 4px; border-bottom: 1px solid #909090; border-top: 1px solid #fff; }
.palette-ctl { width: 16px; padding-top: 3px; }
.palette-ctl svg { display: block; width: 7px; height: 7px; }
.palette-ctl i { width: 5px; height: 8px; margin: 6px 0 0 1px; border: 1px solid #aaa; border-top: 0; }
.swatches { width: 509px; display: grid; grid-template-columns: repeat(20, 1fr); gap: 2px; height: 25px; }
.swatches button { border: 1px solid #999; }
.statusbar { flex: none; height: 23px; margin-top: 1px; padding-top: 2px; border-top: 1px solid #909090; display: grid; grid-template-columns: 1fr 10px 216px 190px; gap: 2px; font: 12px/17px Roboto, "Noto Sans", sans-serif; }
.statusbar span { border: 1px solid #a0a0a0; background: #f0eceb; padding-left: 2px; white-space: nowrap; overflow: hidden; }
.taskbar { flex: none; height: 7px; display: flex; border-top: 1px solid #12304a; overflow: hidden; background: linear-gradient(90deg, #1a6cae, #2a9ad4 400px, #2a8cc8 600px, #1c62b0 1000px, #1a58a4 1200px, #123a6c); }
.orb { width: 28px; height: 28px; margin: 1px 0 0 12px; border-radius: 50%; background: #b8d0e0; }
.ie { width: 24px; height: 20px; margin: 3px 16px 0 42px; border-radius: 50%; border: 3px solid #b8c850; }
.task { width: 56px; height: 14px; margin-right: 6px; border: 1px solid #123a5a; border-radius: 3px; background: linear-gradient(#bfe0f2, #7cbfe2); }
.task::before { content: ""; display: block; width: 26px; height: 12px; margin: 2px auto; background: #e8c070; }
.red-app { margin-left: 62px; }
.red-app::before { background: #d84050; border-radius: 50%; }
.doc::before { background: #fff; }
.blue-app::before { background: #3c80c0; }
.leaf::before { background: #78b850; }
.tray { width: 14px; margin-left: auto; background: #7c98b8; }
```
